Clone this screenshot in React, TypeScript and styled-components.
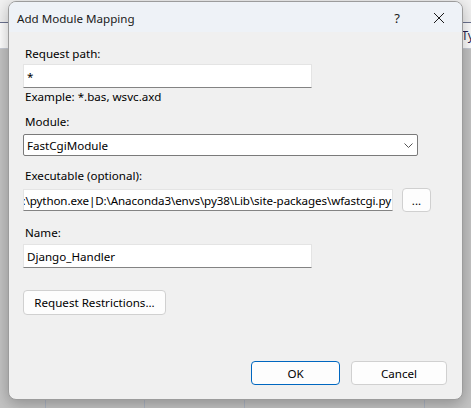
import * as React from 'react';
import styled, { createGlobalStyle } from 'styled-components';

const GlobalStyle = createGlobalStyle`
    html, body {
        margin: 0;
        padding: 0;
        width: 471px;
        height: 408px;
        overflow: hidden;
        background: #f0f0f0;
        font-family: 'Noto Sans', 'Open Sans', sans-serif;
    }
`;

const App = () => {
    return (
        <>
            <GlobalStyle />
            <DivDesktop>
                <DivBackWindowHeader />
                <DivBackWindowBody>
                    <SpanBackText>Ty</SpanBackText>
                </DivBackWindowBody>
                <DivBackColumns>
                    <DivColumnLine $left={45} />
                    <DivColumnLine $left={144} />
                    <DivColumnLine $left={244} />
                    <DivColumnLine $left={424} />
                </DivBackColumns>

                <DivDialog>
                    <DivTitleBar>
                        <SpanTitle>Add Module Mapping</SpanTitle>
                        <SpanHelp>?</SpanHelp>
                        <SpanClose>
                            <svg width="12" height="12" viewBox="0 0 12 12">
                                <path d="M1 1 L11 11 M11 1 L1 11" stroke="#1a1a1a" strokeWidth="1" />
                            </svg>
                        </SpanClose>
                    </DivTitleBar>

                    <DivBody>
                        <DivLabel $top={0}>Request path:</DivLabel>
                        <DivTextBox $width={289} $height={24} $top={2}>*</DivTextBox>
                        <DivLabel $top={1}>Example: *.bas, wsvc.axd</DivLabel>

                        <DivLabel $top={9}>Module:</DivLabel>
                        <DivSelect>
                            <span>FastCgiModule</span>
                            <svg width="9" height="5" viewBox="0 0 9 5">
                                <path d="M0.5 0.5 L4.5 4.5 L8.5 0.5" stroke="#555" strokeWidth="1" fill="none" />
                            </svg>
                        </DivSelect>

                        <DivLabel $top={12}>Executable (optional):</DivLabel>
                        <DivExecRow>
                            <DivTextBox $width={370} $height={22} $top={0} $alignEnd>
                                <SpanScrolled>
                                    C:\python.exe|D:\Anaconda3\envs\py38\Lib\site-packages\wfastcgi.py
                                </SpanScrolled>
                            </DivTextBox>
                            <ButtonDialog $width={29} $height={24}>...</ButtonDialog>
                        </DivExecRow>

                        <DivLabel $top={13}>Name:</DivLabel>
                        <DivTextBox $width={289} $height={24} $top={3}>Django_Handler</DivTextBox>

                        <DivRestrictRow>
                            <ButtonDialog $width={143} $height={25}>Request Restrictions...</ButtonDialog>
                        </DivRestrictRow>
                    </DivBody>

                    <DivFooter>
                        <ButtonDialog $width={89} $height={24} $primary>OK</ButtonDialog>
                        <ButtonDialog $width={96} $height={24}>Cancel</ButtonDialog>
                    </DivFooter>
                </DivDialog>
            </DivDesktop>
        </>
    );
};

const DivDesktop = styled.div`
    position: relative;
    width: 471px;
    height: 408px;
    display: flex;
    flex-direction: column;
    background: #f3f3f3;
`;

const DivBackWindowHeader = styled.div`
    height: 22px;
    border-bottom: 1px solid #6b7390;
    background: #f2f2f2;
`;

const DivBackWindowBody = styled.div`
    height: 26px;
    border-bottom: 1px solid #c9cdd6;
    background: #ffffff;
    display: flex;
    justify-content: flex-end;
    padding-top: 4px;
    box-sizing: border-box;
`;

const SpanBackText = styled.span`
    font-size: 12px;
    color: #2a1f50;
    margin-right: -3px;
`;

const DivBackColumns = styled.div`
    position: relative;
    flex: 1;
    background: #c4c4c4;
`;

const DivColumnLine = styled.div<{ $left: number }>`
    position: absolute;
    top: 0;
    bottom: 0;
    left: ${(p) => p.$left}px;
    width: 1px;
    background: #aeb6c4;
`;

const DivDialog = styled.div`
    position: absolute;
    left: 8px;
    top: 1px;
    width: 455px;
    height: 399px;
    box-sizing: border-box;
    border: 1px solid #9c9c9c;
    border-radius: 8px;
    background: #f0f0f0;
    box-shadow: 0 4px 16px rgba(0, 0, 0, 0.28);
    overflow: hidden;
    display: flex;
    flex-direction: column;
    font-size: 11.6px;
    color: #000;
`;

const DivTitleBar = styled.div`
    height: 30px;
    flex: none;
    display: flex;
    align-items: center;
    background: #eef2f7;
    padding-left: 8px;
`;

const SpanTitle = styled.span`
    flex: 1;
    font-size: 11.6px;
    color: #1a1a1a;
    padding-top: 2px;
`;

const SpanHelp = styled.span`
    width: 20px;
    margin-right: 26px;
    text-align: center;
    font-size: 13px;
    color: #1a1a1a;
    padding-top: 2px;
`;

const SpanClose = styled.span`
    width: 12px;
    margin-right: 17px;
    display: flex;
    align-items: center;
    padding-top: 2px;
`;

const DivBody = styled.div`
    flex: 1;
    padding: 14px 0 0 14px;
    display: flex;
    flex-direction: column;
    align-items: flex-start;
`;

const DivLabel = styled.div<{ $top: number }>`
    margin-top: ${(p) => p.$top}px;
    line-height: 16px;
    padding-left: 2px;
`;

const DivTextBox = styled.div<{ $width: number; $height: number; $top: number; $alignEnd?: boolean }>`
    margin-top: ${(p) => p.$top}px;
    width: ${(p) => p.$width}px;
    height: ${(p) => p.$height}px;
    box-sizing: border-box;
    background: #ffffff;
    border: 1px solid #e4e4e4;
    border-bottom: 1px solid #838383;
    padding: ${(p) => (p.$alignEnd ? '0 1px 0 0' : '0 3px')};
    display: flex;
    align-items: center;
    justify-content: ${(p) => (p.$alignEnd ? 'flex-end' : 'flex-start')};
    overflow: hidden;
    white-space: nowrap;
`;

const SpanScrolled = styled.span`
    flex: none;
    letter-spacing: -0.1px;
`;

const DivSelect = styled.div`
    margin-top: 4px;
    width: 395px;
    height: 22px;
    box-sizing: border-box;
    background: #ffffff;
    border: 1px solid #7a7a7a;
    border-radius: 2px;
    padding: 0 4px 0 3px;
    display: flex;
    align-items: center;
    justify-content: space-between;
`;

const DivExecRow = styled.div`
    margin-top: 4px;
    display: flex;
    align-items: center;
    gap: 9px;
`;

const DivRestrictRow = styled.div`
    margin-top: 22px;
`;

const ButtonDialog = styled.button<{ $width: number; $height: number; $primary?: boolean }>`
    width: ${(p) => p.$width}px;
    height: ${(p) => p.$height}px;
    box-sizing: border-box;
    background: #fdfdfd;
    border: 1px solid ${(p) => (p.$primary ? '#0067c0' : '#d0d0d0')};
    border-radius: 4px;
    font-family: inherit;
    font-size: 11.6px;
    color: #000;
    padding: 0;
`;

const DivFooter = styled.div`
    flex: none;
    display: flex;
    justify-content: flex-end;
    gap: 11px;
    padding: 0 15px 14px 0;
`;

export default App;
